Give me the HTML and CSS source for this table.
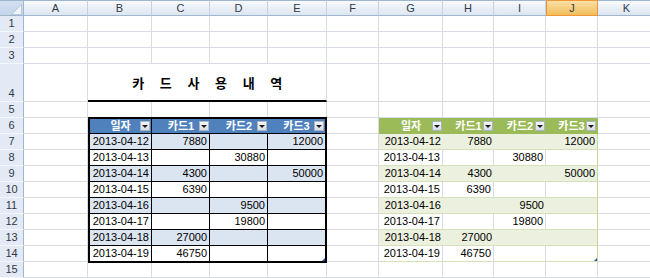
FILE: index.html
```html
<!DOCTYPE html>
<html lang="ko">
<head>
<meta charset="utf-8">
<title>카드 사용 내역</title>
<link rel="stylesheet" href="styles.css">
</head>
<body>
<div class="sheet">
  <div class="corner"><svg width="23" height="15" viewBox="0 0 23 15"><polygon points="21.5,3.5 21.5,13.5 11.5,13.5" fill="#eef3f9" stroke="#b8c9de"/></svg></div>
  <div class="ch">A</div><div class="ch">B</div><div class="ch">C</div><div class="ch">D</div><div class="ch">E</div><div class="ch">F</div><div class="ch">G</div><div class="ch">H</div><div class="ch">I</div><div class="ch sel">J</div><div class="ch">K</div>

  <div class="rh">1</div><div class="c"></div><div class="c"></div><div class="c"></div><div class="c"></div><div class="c"></div><div class="c"></div><div class="c"></div><div class="c"></div><div class="c"></div><div class="c"></div><div class="c"></div>
  <div class="rh">2</div><div class="c"></div><div class="c"></div><div class="c"></div><div class="c"></div><div class="c"></div><div class="c"></div><div class="c"></div><div class="c"></div><div class="c"></div><div class="c"></div><div class="c"></div>
  <div class="rh">3</div><div class="c"></div><div class="c"></div><div class="c"></div><div class="c"></div><div class="c"></div><div class="c"></div><div class="c"></div><div class="c"></div><div class="c"></div><div class="c"></div><div class="c"></div>

  <div class="rh rh-tall">4</div><div class="c"></div><div class="c title">카 드 사 용 내 역</div><div class="c"></div><div class="c"></div><div class="c"></div><div class="c"></div><div class="c"></div><div class="c"></div>

  <div class="rh">5</div><div class="c"></div><div class="c"></div><div class="c"></div><div class="c"></div><div class="c"></div><div class="c"></div><div class="c"></div><div class="c"></div><div class="c"></div><div class="c"></div><div class="c"></div>

  <div class="rh">6</div><div class="c"></div><div class="c"></div><div class="c"></div>
  <div class="rh">7</div><div class="c"></div><div class="c"></div><div class="c"></div>
  <div class="rh">8</div><div class="c"></div><div class="c"></div><div class="c"></div>
  <div class="rh">9</div><div class="c"></div><div class="c"></div><div class="c"></div>
  <div class="rh">10</div><div class="c"></div><div class="c"></div><div class="c"></div>
  <div class="rh">11</div><div class="c"></div><div class="c"></div><div class="c"></div>
  <div class="rh">12</div><div class="c"></div><div class="c"></div><div class="c"></div>
  <div class="rh">13</div><div class="c"></div><div class="c"></div><div class="c"></div>
  <div class="rh">14</div><div class="c"></div><div class="c"></div><div class="c"></div>

  <div class="rh">15</div><div class="c"></div><div class="c"></div><div class="c"></div><div class="c"></div><div class="c"></div><div class="c"></div><div class="c"></div><div class="c"></div><div class="c"></div><div class="c"></div><div class="c"></div>

  <div class="lt">
    <div class="lh sep"><span>일자</span><i class="fb"></i></div>
    <div class="lh"><span>카드1</span><i class="fb"></i></div>
    <div class="lh"><span>카드2</span><i class="fb"></i></div>
    <div class="lh last"><span>카드3</span><i class="fb"></i></div>

    <div class="ld band">2013-04-12</div><div class="ld band">7880</div><div class="ld band"></div><div class="ld band last">12000</div>
    <div class="ld">2013-04-13</div><div class="ld"></div><div class="ld">30880</div><div class="ld last"></div>
    <div class="ld band">2013-04-14</div><div class="ld band">4300</div><div class="ld band"></div><div class="ld band last">50000</div>
    <div class="ld">2013-04-15</div><div class="ld">6390</div><div class="ld"></div><div class="ld last"></div>
    <div class="ld band">2013-04-16</div><div class="ld band"></div><div class="ld band">9500</div><div class="ld band last"></div>
    <div class="ld">2013-04-17</div><div class="ld"></div><div class="ld">19800</div><div class="ld last"></div>
    <div class="ld band">2013-04-18</div><div class="ld band">27000</div><div class="ld band"></div><div class="ld band last"></div>
    <div class="ld bottom">2013-04-19</div><div class="ld bottom">46750</div><div class="ld bottom"></div><div class="ld bottom last handle"></div>
  </div>

  <div class="rt">
    <div class="rhd"><span>일자</span><i class="fb"></i></div>
    <div class="rhd"><span>카드1</span><i class="fb"></i></div>
    <div class="rhd"><span>카드2</span><i class="fb"></i></div>
    <div class="rhd last"><span>카드3</span><i class="fb"></i></div>

    <div class="rd band">2013-04-12</div><div class="rd band">7880</div><div class="rd band"></div><div class="rd band last">12000</div>
    <div class="rd">2013-04-13</div><div class="rd"></div><div class="rd">30880</div><div class="rd last"></div>
    <div class="rd band">2013-04-14</div><div class="rd band">4300</div><div class="rd band"></div><div class="rd band last">50000</div>
    <div class="rd">2013-04-15</div><div class="rd">6390</div><div class="rd"></div><div class="rd last"></div>
    <div class="rd band">2013-04-16</div><div class="rd band"></div><div class="rd band">9500</div><div class="rd band last"></div>
    <div class="rd">2013-04-17</div><div class="rd"></div><div class="rd">19800</div><div class="rd last"></div>
    <div class="rd band">2013-04-18</div><div class="rd band">27000</div><div class="rd band"></div><div class="rd band last"></div>
    <div class="rd">2013-04-19</div><div class="rd">46750</div><div class="rd"></div><div class="rd last handle"></div>
  </div>
</div>
</body>
</html>
```
FILE: styles.css
```css
* {
  box-sizing: border-box;
  margin: 0;
  padding: 0;
}

html, body {
  width: 650px;
  height: 278px;
  overflow: hidden;
  background: #ffffff;
}

body {
  font-family: "Liberation Sans", "Noto Sans CJK KR", sans-serif;
  font-size: 11px;
  color: #000;
}

.sheet {
  display: grid;
  grid-template-columns: 24px 64px 64px 58px 58px 59px 52px 64px 51px 52px 52px 58px;
  grid-template-rows: 16px 16px 16px 16px 38px repeat(11, 16px);
  width: 656px;
}

.corner {
  background: linear-gradient(#d3e0f0, #c3d4ea);
  border-right: 1px solid #9eb6ce;
  border-bottom: 1px solid #9eb6ce;
  border-top: 1px solid #9eb6ce;
  overflow: hidden;
}

.corner svg {
  display: block;
}

.ch {
  display: flex;
  align-items: center;
  justify-content: center;
  background: linear-gradient(#f8fafd 0%, #e9eff7 50%, #dde6f1 100%);
  border-top: 1px solid #9eb6ce;
  border-right: 1px solid #c3d1e2;
  border-bottom: 1px solid #9eb6ce;
  color: #303a47;
  font-size: 11px;
  line-height: 1;
}

.ch.sel {
  background: linear-gradient(#fbdfa6 0%, #f6cd7c 55%, #f1bf5c 100%);
  border-top-color: #f29536;
  border-right: 1px solid #f29536;
  border-left: 1px solid #f29536;
  border-bottom: 1px solid #f29536;
}

.rh {
  display: flex;
  align-items: center;
  justify-content: center;
  background: #e3eaf5;
  border-right: 1px solid #9eb6ce;
  border-bottom: 1px solid #f4f7fb;
  color: #303a47;
  font-size: 11px;
  line-height: 1;
}

.rh-tall {
  align-items: flex-end;
  padding-bottom: 2px;
}

.c {
  border-right: 1px solid #d7dce5;
  border-bottom: 1px solid #d7dce5;
}

.title {
  grid-column: span 4;
  display: flex;
  align-items: center;
  justify-content: center;
  padding-left: 8px;
  padding-top: 1px;
  border-bottom: 2px solid #000;
  font-family: "Noto Sans CJK KR", sans-serif;
  font-weight: bold;
  font-size: 13px;
  letter-spacing: 7.5px;
  word-spacing: -3px;
  white-space: pre;
}

/* left table */
.lt {
  grid-column: 3 / 7;
  grid-row: 7 / 16;
  margin: -1px 0 -1px 0;
  display: grid;
  grid-template-columns: 62px 58px 58px 57px;
  grid-template-rows: 15px repeat(7, 16px) 15px;
  border: 2px solid #000;
  background: #fff;
}

.lh, .rhd {
  display: grid;
  align-items: center;
  color: #fff;
  font-weight: bold;
  line-height: 1;
}

.lh {
  background: #4f81bd;
  border-bottom: 1px solid #000;
}

.lh.sep {
  border-right: 1px solid #000;
}

.lh > *, .rhd > * {
  grid-area: 1 / 1;
}

.lh span, .rhd span {
  justify-self: center;
}

.fb {
  justify-self: end;
  align-self: center;
  width: 10px;
  height: 10px;
  margin-right: 1px;
  border: 1px solid #a9b4c2;
  background: linear-gradient(#f4f6f9, #d7dde5);
  display: flex;
  align-items: center;
  justify-content: center;
}

.fb::after {
  content: "";
  width: 0;
  height: 0;
  margin-top: 1px;
  border-left: 3px solid transparent;
  border-right: 3px solid transparent;
  border-top: 3px solid #1c1c1c;
}

.ld, .rd {
  display: flex;
  align-items: center;
  justify-content: flex-end;
  padding-right: 2px;
  line-height: 1;
}

.ld {
  border-right: 1px solid #000;
  border-bottom: 1px solid #000;
}

.ld.last {
  border-right: none;
}

.ld.bottom {
  border-bottom: none;
}

.ld.band {
  background: #dbe5f1;
}

.handle {
  position: relative;
}

.handle::after {
  content: "";
  position: absolute;
  right: 0;
  bottom: 0;
  width: 0;
  height: 0;
  border-left: 3px solid transparent;
  border-bottom: 3px solid #2f4fa8;
}

/* right table */
.rt {
  grid-column: 8 / 12;
  grid-row: 7 / 16;
  display: grid;
  grid-template-columns: 64px 51px 52px 52px;
  grid-template-rows: repeat(9, 16px);
  background: #fff;
}

.rhd {
  background: #9bbb59;
}

.rhd.last {
  border-right: 1px solid #9bbb59;
}

.rd {
  border-right: 1px solid #d7dce5;
  border-bottom: 1px solid #d4e1b9;
}

.rd.band {
  background: #ebf1de;
  border-right: none;
}

.rd.last {
  border-right: 1px solid #c4d79b;
}
```
